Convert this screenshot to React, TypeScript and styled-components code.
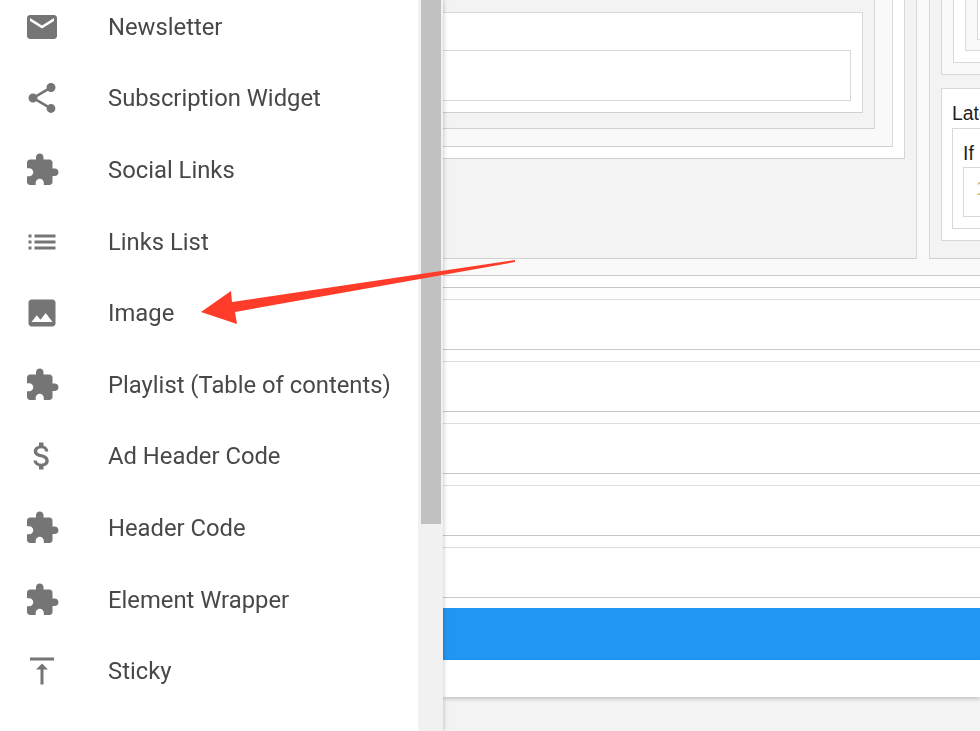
import styled, { createGlobalStyle } from 'styled-components';

const GlobalStyle = createGlobalStyle`
    html, body {
        margin: 0;
        height: 100%;
        overflow: hidden;
    }
    body {
        font-family: Roboto, "Liberation Sans", sans-serif;
        background: #f3f3f3;
    }
`;

// the capture is an enlarged, slightly soft screenshot
const Page = styled.div`
    position: relative;
    display: flex;
    width: 980px;
    height: 731px;
    overflow: hidden;
    filter: blur(0.45px);
`;

const Drawer = styled.aside`
    display: flex;
    flex: 0 0 443px;
    height: 731px;
    background: #fff;
    box-shadow: 0 0 5px rgba(0, 0, 0, 0.25);
    z-index: 1;
`;

const MenuList = styled.ul`
    flex: 0 0 418px;
    list-style: none;
    margin: -9px 0 0;
    padding: 0;
`;

const MenuItem = styled.li`
    display: flex;
    align-items: center;
    height: 71.6px;
    padding-left: 24px;
    box-sizing: border-box;
`;

const MenuIcon = styled.svg`
    flex: 0 0 36px;
    width: 36px;
    height: 36px;
    margin-right: 48px;
    fill: #757575;
`;

const MenuLabel = styled.span`
    font-size: 23.8px;
    color: #484848;
    white-space: nowrap;
`;

const ScrollTrack = styled.div`
    flex: 0 0 25px;
    background: #f1f1f1;
    padding: 0 2px 0 3px;
    box-sizing: border-box;
`;

const ScrollThumb = styled.div`
    height: 524px;
    background: #c1c1c1;
`;

const Main = styled.main`
    flex: 1;
    min-width: 0;
    overflow: hidden;
    display: flex;
    flex-direction: column;
`;

const Columns = styled.div`
    display: flex;
    flex: 0 0 258px;
    gap: 12px;
    background: #fafafa;
`;

// one level of the nested form boxes, top edges are scrolled out of view
const Nest = styled.div<{ $bg: string; $right?: number; $bottom?: number; $top?: number; $boxed?: boolean }>`
    display: flex;
    flex-direction: column;
    box-sizing: border-box;
    background: ${(p) => p.$bg};
    border-right: 1px solid #d8d8d8;
    border-bottom: 1px solid #d0d0d0;
    border-top: ${(p) => (p.$boxed ? '1px solid #d8d8d8' : '0')};
    padding: ${(p) => p.$top ?? 0}px ${(p) => p.$right ?? 0}px ${(p) => p.$bottom ?? 0}px 0;
    flex: 1;
`;

const LeftPanel = styled(Nest)`
    flex: 0 0 474px;
`;

const InnerField = styled.div`
    height: 51px;
    box-sizing: border-box;
    background: #fff;
    border-top: 1px solid #d8d8d8;
    border-right: 1px solid #d8d8d8;
    border-bottom: 1px solid #d8d8d8;
`;

const RightPanel = styled.div`
    flex: 1;
    min-width: 0;
    box-sizing: border-box;
    display: flex;
    flex-direction: column;
    gap: 13px;
    padding: 0 0 16px 11px;
    background: #f3f3f3;
    border-left: 1px solid #d8d8d8;
    border-bottom: 1px solid #d0d0d0;
`;

const SideNest = styled.div<{ $bg: string; $height: number }>`
    box-sizing: border-box;
    flex: 0 0 ${(p) => p.$height}px;
    height: ${(p) => p.$height}px;
    padding: 0 0 0 11px;
    background: ${(p) => p.$bg};
    border-left: 1px solid #d8d8d8;
    border-bottom: 1px solid #d8d8d8;
`;

const SideBox = styled.div<{ $height: number }>`
    box-sizing: border-box;
    flex: 0 0 ${(p) => p.$height}px;
    height: ${(p) => p.$height}px;
    border: 1px solid #d8d8d8;
    border-right: 0;
    background: #fff;
    padding: 13px 0 0 10px;
    overflow: hidden;
`;

const SideLabel = styled.div<{ $height: number }>`
    font-family: "Liberation Sans", Arial, sans-serif;
    font-size: 19.4px;
    line-height: 22px;
    height: ${(p) => p.$height}px;
    color: #1d1d1d;
    white-space: nowrap;
`;

const SideInput = styled.div`
    box-sizing: border-box;
    height: 50px;
    border: 1px solid #d8d8d8;
    border-right: 0;
    background: #fff;
    padding-left: 12px;
    font-family: "Liberation Sans", Arial, sans-serif;
    font-size: 19.4px;
    line-height: 40px;
    color: #c8bc78;
`;

const Rows = styled.div`
    display: flex;
    flex-direction: column;
    background: #fff;
`;

const RowBand = styled.div<{ $height: number; $bg?: string; $light?: boolean }>`
    box-sizing: border-box;
    height: ${(p) => p.$height}px;
    background: ${(p) => p.$bg ?? '#fff'};
    border-bottom: 1px solid ${(p) => (p.$light ? '#dedede' : '#c8c8c8')};
`;

const BlueBar = styled.div`
    height: 52px;
    margin-top: 10px;
    background: #2196f3;
`;

const CardFoot = styled.div`
    height: 37px;
    background: #fff;
    box-shadow: 0 2px 4px rgba(0, 0, 0, 0.2);
`;

const Arrow = styled.svg`
    position: absolute;
    left: 0;
    top: 0;
    width: 980px;
    height: 731px;
    pointer-events: none;
    z-index: 2;
`;

const PUZZLE = 'M20.5 11H19V7c0-1.1-.9-2-2-2h-4V3.5C13 2.12 11.88 1 10.5 1S8 2.12 8 3.5V5H4c-1.1 0-1.99.9-1.99 2v3.8H3.5c1.49 0 2.7 1.21 2.7 2.7s-1.21 2.7-2.7 2.7H2V20c0 1.1.9 2 2 2h3.8v-1.5c0-1.49 1.21-2.7 2.7-2.7 1.49 0 2.7 1.21 2.7 2.7V22H17c1.1 0 2-.9 2-2v-4h1.5c1.38 0 2.5-1.12 2.5-2.5S21.88 11 20.5 11z';

const items = [
    { label: 'Newsletter', icon: 'M20 4H4c-1.1 0-1.99.9-1.99 2L2 18c0 1.1.9 2 2 2h16c1.1 0 2-.9 2-2V6c0-1.1-.9-2-2-2zm0 4l-8 5-8-5V6l8 5 8-5v2z' },
    { label: 'Subscription Widget', icon: 'M18 16.08c-.76 0-1.44.3-1.96.77L8.91 12.7c.05-.23.09-.46.09-.7s-.04-.47-.09-.7l7.05-4.11c.54.5 1.25.81 2.04.81 1.66 0 3-1.34 3-3s-1.34-3-3-3-3 1.34-3 3c0 .24.04.47.09.7L8.04 9.81C7.5 9.31 6.79 9 6 9c-1.66 0-3 1.34-3 3s1.34 3 3 3c.79 0 1.5-.31 2.04-.81l7.12 4.16c-.05.21-.08.43-.08.65 0 1.61 1.31 2.92 2.92 2.92 1.61 0 2.92-1.31 2.92-2.92s-1.31-2.92-2.92-2.92z' },
    { label: 'Social Links', icon: PUZZLE },
    { label: 'Links List', icon: 'M3 13h2v-2H3v2zm0 4h2v-2H3v2zm0-8h2V7H3v2zm4 4h14v-2H7v2zm0 4h14v-2H7v2zM7 7v2h14V7H7z' },
    { label: 'Image', icon: 'M21 19V5c0-1.1-.9-2-2-2H5c-1.1 0-2 .9-2 2v14c0 1.1.9 2 2 2h14c1.1 0 2-.9 2-2zM8.5 13.5l2.5 3.01L14.5 12l4.5 6H5l3.5-4.5z' },
    { label: 'Playlist (Table of contents)', icon: PUZZLE },
    { label: 'Ad Header Code', icon: 'M11.8 10.9c-2.27-.59-3-1.2-3-2.15 0-1.09 1.01-1.85 2.7-1.85 1.78 0 2.44.85 2.5 2.1h2.21c-.07-1.72-1.12-3.3-3.21-3.81V3h-3v2.16c-1.94.42-3.5 1.68-3.5 3.61 0 2.31 1.91 3.46 4.7 4.13 2.5.6 3 1.48 3 2.41 0 .69-.49 1.79-2.7 1.79-2.06 0-2.87-.92-2.98-2.1h-2.2c.12 2.19 1.76 3.42 3.68 3.83V21h3v-2.15c1.95-.37 3.5-1.5 3.5-3.55 0-2.84-2.43-3.81-4.7-4.4z' },
    { label: 'Header Code', icon: PUZZLE },
    { label: 'Element Wrapper', icon: PUZZLE },
    { label: 'Sticky', icon: 'M8 11h3v10h2V11h3l-4-4-4 4zM4 3v2h16V3H4z' },
];

const bands = [
    { height: 17, bg: '#f9f9f9' },
    { height: 12 },
    { height: 12, bg: '#fdfdfd', light: true },
    { height: 50 },
    { height: 12, light: true },
    { height: 50 },
    { height: 12, light: true },
    { height: 50 },
    { height: 12, light: true },
    { height: 50 },
    { height: 12, light: true },
    { height: 50 },
];

function App() {
    return (
        <Page>
            <GlobalStyle />
            <Drawer>
                <MenuList>
                    {items.map((item) => (
                        <MenuItem key={item.label}>
                            <MenuIcon viewBox="0 0 24 24">
                                <path d={item.icon} />
                            </MenuIcon>
                            <MenuLabel>{item.label}</MenuLabel>
                        </MenuItem>
                    ))}
                </MenuList>
                <ScrollTrack>
                    <ScrollThumb />
                </ScrollTrack>
            </Drawer>
            <Main>
                <Columns>
                    <LeftPanel $bg="#f3f3f3" $right={11} $bottom={99}>
                        <Nest $bg="#fff" $right={11} $bottom={11}>
                            <Nest $bg="#f9f9f9" $right={17} $bottom={17}>
                                <Nest $bg="#f3f3f3" $right={11} $bottom={15} $top={12}>
                                    <Nest $bg="#fff" $right={11} $bottom={11} $top={37} $boxed>
                                        <InnerField />
                                    </Nest>
                                </Nest>
                            </Nest>
                        </Nest>
                    </LeftPanel>
                    <RightPanel>
                        <SideNest $bg="#f9f9f9" $height={75}>
                            <SideNest $bg="#fff" $height={63}>
                                <SideNest $bg="#f9f9f9" $height={51}>
                                    <SideNest $bg="#fff" $height={40} />
                                </SideNest>
                            </SideNest>
                        </SideNest>
                        <SideBox $height={153}>
                            <SideLabel $height={26}>Latest</SideLabel>
                            <SideBox $height={101}>
                                <SideLabel $height={25}>If</SideLabel>
                                <SideInput>1</SideInput>
                            </SideBox>
                        </SideBox>
                    </RightPanel>
                </Columns>
                <Rows>
                    {bands.map((band, i) => (
                        <RowBand key={i} $height={band.height} $bg={band.bg} $light={band.light} />
                    ))}
                    <BlueBar />
                    <CardFoot />
                </Rows>
            </Main>
            <Arrow viewBox="0 0 980 731">
                <polygon
                    fill="#ff3b2a"
                    points="515,260 515,262 235,312 237,324 201,312 231,291 232,302"
                />
            </Arrow>
        </Page>
    );
}

export default App;
